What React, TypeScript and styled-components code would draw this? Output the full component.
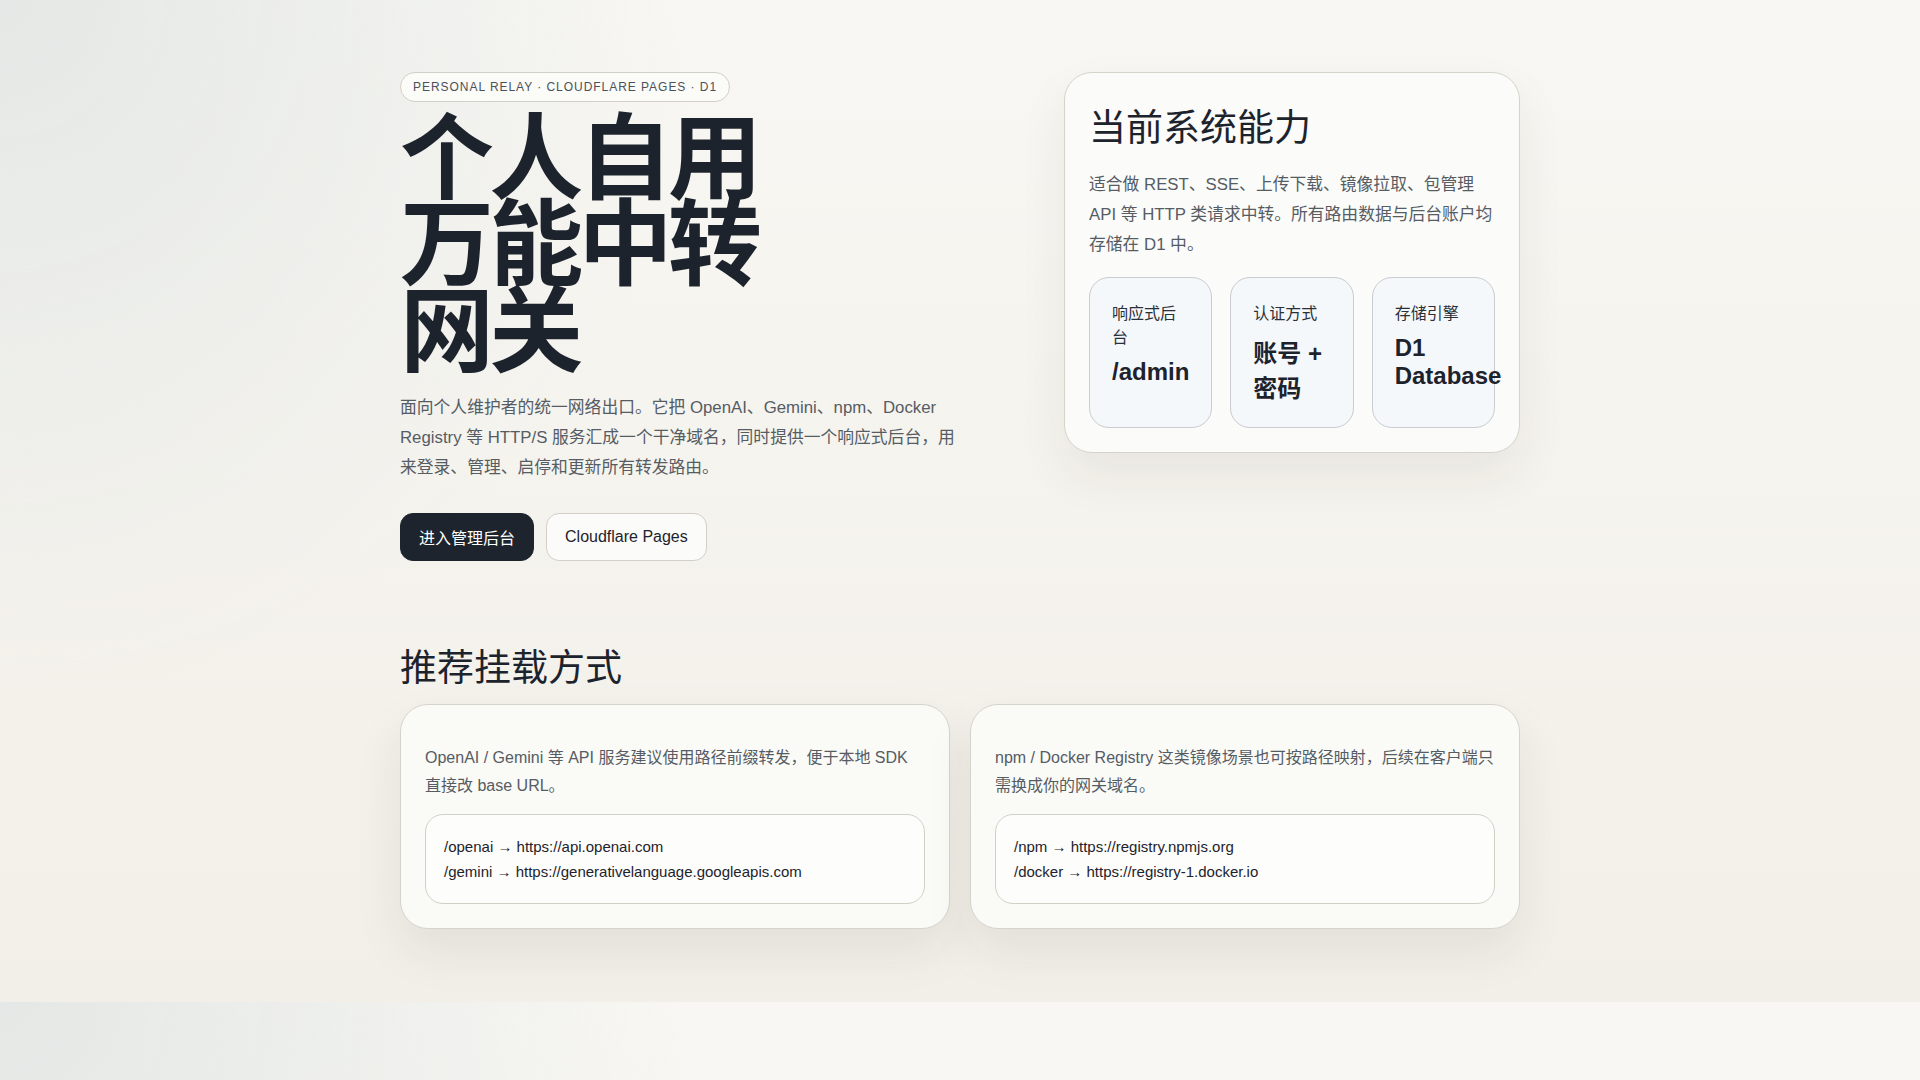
import React from 'react'
import styled, { createGlobalStyle } from 'styled-components'

const stats = [
  { label: '响应式后台', value: '/admin' },
  { label: '认证方式', value: '账号 + 密码' },
  { label: '存储引擎', value: 'D1 Database' },
]

const mounts = [
  {
    text: 'OpenAI / Gemini 等 API 服务建议使用路径前缀转发，便于本地 SDK 直接改 base URL。',
    routes: ['/openai → https://api.openai.com', '/gemini → https://generativelanguage.googleapis.com'],
  },
  {
    text: 'npm / Docker Registry 这类镜像场景也可按路径映射，后续在客户端只需换成你的网关域名。',
    routes: ['/npm → https://registry.npmjs.org', '/docker → https://registry-1.docker.io'],
  },
]

const App = () => {
  return (
    <>
      <GlobalStyle />
      <Page>
        <Hero>
          <Intro>
            <Badge>Personal relay · Cloudflare Pages · D1</Badge>
            <Title>个人自用万能中转网关</Title>
            <Lead>
              面向个人维护者的统一网络出口。它把 OpenAI、Gemini、npm、Docker Registry 等 HTTP/S
              服务汇成一个干净域名，同时提供一个响应式后台，用来登录、管理、启停和更新所有转发路由。
            </Lead>
            <Actions>
              <Button $primary>进入管理后台</Button>
              <Button>Cloudflare Pages</Button>
            </Actions>
          </Intro>

          <InfoCard>
            <CardTitle>当前系统能力</CardTitle>
            <CardText>
              适合做 REST、SSE、上传下载、镜像拉取、包管理 API 等 HTTP 类请求中转。所有路由数据与后台账户均存储在 D1 中。
            </CardText>
            <StatGrid>
              {stats.map((s) => (
                <Stat key={s.label}>
                  <StatLabel>{s.label}</StatLabel>
                  <StatValue>{s.value}</StatValue>
                </Stat>
              ))}
            </StatGrid>
          </InfoCard>
        </Hero>

        <Section>
          <SectionTitle>推荐挂载方式</SectionTitle>
          <MountGrid>
            {mounts.map((m) => (
              <MountCard key={m.routes[0]}>
                <MountText>{m.text}</MountText>
                <RouteBox>
                  {m.routes.map((r) => (
                    <RouteLine key={r}>{r}</RouteLine>
                  ))}
                </RouteBox>
              </MountCard>
            ))}
          </MountGrid>
        </Section>
      </Page>
    </>
  )
}

export default App

const GlobalStyle = createGlobalStyle`
  * { box-sizing: border-box; }
  html, body { margin: 0; padding: 0; }
  body {
    font-family: "Liberation Sans", Arial, "Noto Sans CJK SC", sans-serif;
    color: #1d232c;
    background:
      radial-gradient(circle at 0% 0%, rgba(226, 230, 228, 0.9) 0%, rgba(226, 230, 228, 0) 32%),
      linear-gradient(180deg, #f8f7f3 0%, #f2efe8 100%);
  }
`

const Page = styled.main`
  width: 1120px;
  margin: 0 auto;
  padding: 72px 0 73px;
`

const Hero = styled.section`
  display: grid;
  grid-template-columns: minmax(0, 1fr) 456px;
  gap: 48px;
  align-items: start;
`

const Intro = styled.div`
  display: flex;
  flex-direction: column;
  align-items: flex-start;
`

const Badge = styled.span`
  display: inline-flex;
  align-items: center;
  height: 30px;
  padding: 0 12px;
  border: 1px solid #d2cfc6;
  border-radius: 999px;
  background: #fbfbf8;
  color: #4b515a;
  font-size: 12px;
  letter-spacing: 0.08em;
  text-transform: uppercase;
`

const Title = styled.h1`
  margin: 6px 0 0;
  max-width: 400px;
  font-family: "Noto Sans CJK SC", sans-serif;
  font-size: 94px;
  font-weight: 700;
  line-height: 0.92;
  letter-spacing: -0.05em;
  color: #1d232c;
`

const Lead = styled.p`
  margin: 26px 0 0;
  max-width: 570px;
  font-size: 16.8px;
  line-height: 30px;
  color: #565c64;
`

const Actions = styled.div`
  display: flex;
  gap: 12px;
  margin-top: 30px;
`

const Button = styled.button<{ $primary?: boolean }>`
  height: 48px;
  padding: 0 18px;
  border-radius: 13px;
  border: 1px solid ${(p) => (p.$primary ? '#1e242d' : '#d2cfc6')};
  background: ${(p) => (p.$primary ? '#1e242d' : '#fbfbf9')};
  color: ${(p) => (p.$primary ? '#ffffff' : '#1d232c')};
  font-family: "Liberation Sans", Arial, "Noto Sans CJK SC", sans-serif;
  font-size: 16px;
  cursor: pointer;
`

const InfoCard = styled.div`
  padding: 30px 24px 24px;
  border: 1px solid #d6d3ca;
  border-radius: 28px;
  background: #fbfbf9;
  box-shadow: 0 22px 50px rgba(40, 38, 30, 0.07);
`

const CardTitle = styled.h2`
  margin: 0;
  font-family: "Noto Sans CJK SC", sans-serif;
  font-size: 37px;
  font-weight: 400;
  line-height: 1.2;
  color: #1d232c;
`

const CardText = styled.p`
  margin: 23px 0 0;
  font-size: 16.8px;
  line-height: 30px;
  color: #565c64;
`

const StatGrid = styled.div`
  display: grid;
  grid-template-columns: repeat(3, minmax(0, 1fr));
  gap: 18px;
  margin-top: 17px;
`

const Stat = styled.div`
  padding: 24px 22px 23px;
  border: 1px solid #c9ccd0;
  border-radius: 20px;
  background: #f5f8fb;
`

const StatLabel = styled.div`
  font-size: 16px;
  line-height: 1.5;
  color: #2a3038;
`

const StatValue = styled.div`
  margin-top: 8px;
  font-size: 24px;
  font-weight: 700;
  line-height: normal;
  color: #1d232c;
`

const Section = styled.section`
  margin-top: 82px;
`

const SectionTitle = styled.h2`
  margin: 0;
  font-family: "Noto Sans CJK SC", sans-serif;
  font-size: 37px;
  font-weight: 400;
  line-height: 1.2;
  color: #1d232c;
`

const MountGrid = styled.div`
  display: grid;
  grid-template-columns: 1fr 1fr;
  gap: 20px;
  margin-top: 16px;
`

const MountCard = styled.article`
  padding: 39px 24px 24px;
  border: 1px solid #d6d3ca;
  border-radius: 28px;
  background: #fafaf7;
  box-shadow: 0 22px 50px rgba(40, 38, 30, 0.08);
`

const MountText = styled.p`
  margin: 0;
  font-size: 16px;
  line-height: 28px;
  color: #565c64;
`

const RouteBox = styled.div`
  margin-top: 14px;
  padding: 19px 18px;
  border: 1px solid #d2cfc6;
  border-radius: 18px;
  background: #fdfdfb;
`

const RouteLine = styled.div`
  font-size: 15px;
  line-height: 25px;
  color: #1d232c;
`
